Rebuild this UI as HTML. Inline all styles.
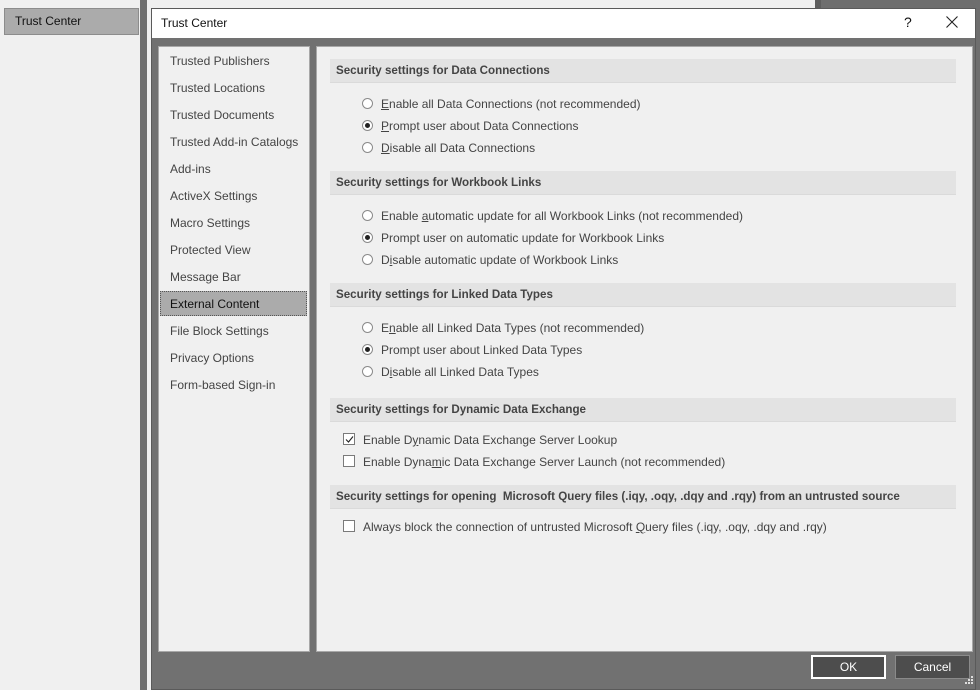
<!DOCTYPE html>
<html><head><meta charset="utf-8"><style>
*{box-sizing:border-box;margin:0;padding:0}
body{width:980px;height:690px;position:relative;overflow:hidden;background:#f0f0f0;font-family:"Liberation Sans",sans-serif;font-size:12px;color:#444}
.abs{position:absolute}
.t{position:absolute;white-space:nowrap}
.hdr{position:absolute;left:330px;width:626px;height:24px;background:#e3e3e3;border-bottom:1px solid #dadada;font-weight:bold;color:#444;font-size:11.6px;line-height:24px;padding-left:6px}
.rad{position:absolute;width:11px;height:11px;border:1px solid #8a8a8a;border-radius:50%;background:#fff}
.rad.on::after{content:"";position:absolute;left:2px;top:2px;width:5px;height:5px;border-radius:50%;background:#222}
.chk{position:absolute;width:12px;height:12px;border:1px solid #7a7a7a;background:#fff}
.li{position:absolute;left:170px;white-space:nowrap;color:#444}
u{text-decoration:underline}
</style></head><body>
<div class="abs" style="left:4px;top:8px;width:135px;height:27px;background:#ababab;border:1px solid #8c8c8c"></div>
<div class="t" style="left:15px;top:14px;color:#111">Trust Center</div>
<div class="abs" style="left:140px;top:0;width:7px;height:690px;background:#6f6f6f"></div>
<div class="abs" style="left:815px;top:0;width:165px;height:690px;background:#6e6e6e"></div>
<div class="abs" style="left:815px;top:0;width:6px;height:690px;background:#5e5e5e"></div>
<div class="abs" style="left:151px;top:8px;width:825px;height:682px;background:#717171;border:1px solid #5a5a5a"></div>
<div class="abs" style="left:152px;top:9px;width:823px;height:29px;background:#fff"></div>
<div class="t" style="left:161px;top:16px;color:#111">Trust Center</div>
<div class="t" style="left:904px;top:14px;color:#111;font-size:14px">?</div>
<svg class="abs" style="left:946px;top:16px" width="12" height="12"><path d="M0.5 0.5L11.5 11.5M11.5 0.5L0.5 11.5" stroke="#222" stroke-width="1.1"/></svg>
<div class="abs" style="left:158px;top:46px;width:152px;height:606px;background:#f0f0f0;border:1px solid #a8a8a8"></div>
<div class="abs" style="left:316px;top:46px;width:657px;height:606px;background:#f0f0f0;border:1px solid #a8a8a8"></div>
<div class="abs" style="left:160px;top:291px;width:147px;height:25px;background:#ababab;border:1px dotted #555"></div>
<div class="li" style="top:54px">Trusted Publishers</div>
<div class="li" style="top:81px">Trusted Locations</div>
<div class="li" style="top:108px">Trusted Documents</div>
<div class="li" style="top:135px">Trusted Add-in Catalogs</div>
<div class="li" style="top:162px">Add-ins</div>
<div class="li" style="top:189px">ActiveX Settings</div>
<div class="li" style="top:216px">Macro Settings</div>
<div class="li" style="top:243px">Protected View</div>
<div class="li" style="top:270px">Message Bar</div>
<div class="li" style="top:297px;color:#111">External Content</div>
<div class="li" style="top:324px">File Block Settings</div>
<div class="li" style="top:351px">Privacy Options</div>
<div class="li" style="top:378px">Form-based Sign-in</div>

<div class="hdr" style="top:59px">Security settings for Data Connections</div>
<div class="rad" style="left:362px;top:98px"></div><div class="t" style="left:381px;top:97px"><u>E</u>nable all Data Connections (not recommended)</div>
<div class="rad on" style="left:362px;top:120px"></div><div class="t" style="left:381px;top:119px"><u>P</u>rompt user about Data Connections</div>
<div class="rad" style="left:362px;top:142px"></div><div class="t" style="left:381px;top:141px"><u>D</u>isable all Data Connections</div>

<div class="hdr" style="top:171px">Security settings for Workbook Links</div>
<div class="rad" style="left:362px;top:210px"></div><div class="t" style="left:381px;top:209px">Enable <u>a</u>utomatic update for all Workbook Links (not recommended)</div>
<div class="rad on" style="left:362px;top:232px"></div><div class="t" style="left:381px;top:231px">Prompt user on automatic update for Workbook Links</div>
<div class="rad" style="left:362px;top:254px"></div><div class="t" style="left:381px;top:253px">D<u>i</u>sable automatic update of Workbook Links</div>

<div class="hdr" style="top:283px">Security settings for Linked Data Types</div>
<div class="rad" style="left:362px;top:322px"></div><div class="t" style="left:381px;top:321px">E<u>n</u>able all Linked Data Types (not recommended)</div>
<div class="rad on" style="left:362px;top:344px"></div><div class="t" style="left:381px;top:343px">Prompt user about Linked Data Types</div>
<div class="rad" style="left:362px;top:366px"></div><div class="t" style="left:381px;top:365px">D<u>i</u>sable all Linked Data Types</div>

<div class="hdr" style="top:398px">Security settings for Dynamic Data Exchange</div>
<div class="chk" style="left:343px;top:433px"></div>
<svg class="abs" style="left:345px;top:435px" width="9" height="9"><path d="M1 4.5L3.5 7L8 1.5" stroke="#222" stroke-width="1.1" fill="none"/></svg>
<div class="t" style="left:363px;top:433px">Enable D<u>y</u>namic Data Exchange Server Lookup</div>
<div class="chk" style="left:343px;top:455px"></div>
<div class="t" style="left:363px;top:455px">Enable Dyna<u>m</u>ic Data Exchange Server Launch (not recommended)</div>

<div class="hdr" style="top:485px">Security settings for opening&nbsp; Microsoft Query files (.iqy, .oqy, .dqy and .rqy) from an untrusted source</div>
<div class="chk" style="left:343px;top:520px"></div>
<div class="t" style="left:363px;top:520px">Always block the connection of untrusted Microsoft <u>Q</u>uery files (.iqy, .oqy, .dqy and .rqy)</div>

<div class="abs" style="left:811px;top:655px;width:75px;height:24px;background:#4d4d4d;border:2px solid #fff;color:#fff;text-align:center;line-height:20px">OK</div>
<div class="abs" style="left:895px;top:655px;width:75px;height:24px;background:#4d4d4d;border:1px solid #8a8a8a;color:#fff;text-align:center;line-height:22px">Cancel</div>
<svg class="abs" style="left:965px;top:676px" width="10" height="10" fill="#ddd"><rect x="6" y="0" width="2" height="2"/><rect x="3" y="3" width="2" height="2"/><rect x="6" y="3" width="2" height="2"/><rect x="0" y="6" width="2" height="2"/><rect x="3" y="6" width="2" height="2"/><rect x="6" y="6" width="2" height="2"/></svg>
</body></html>
